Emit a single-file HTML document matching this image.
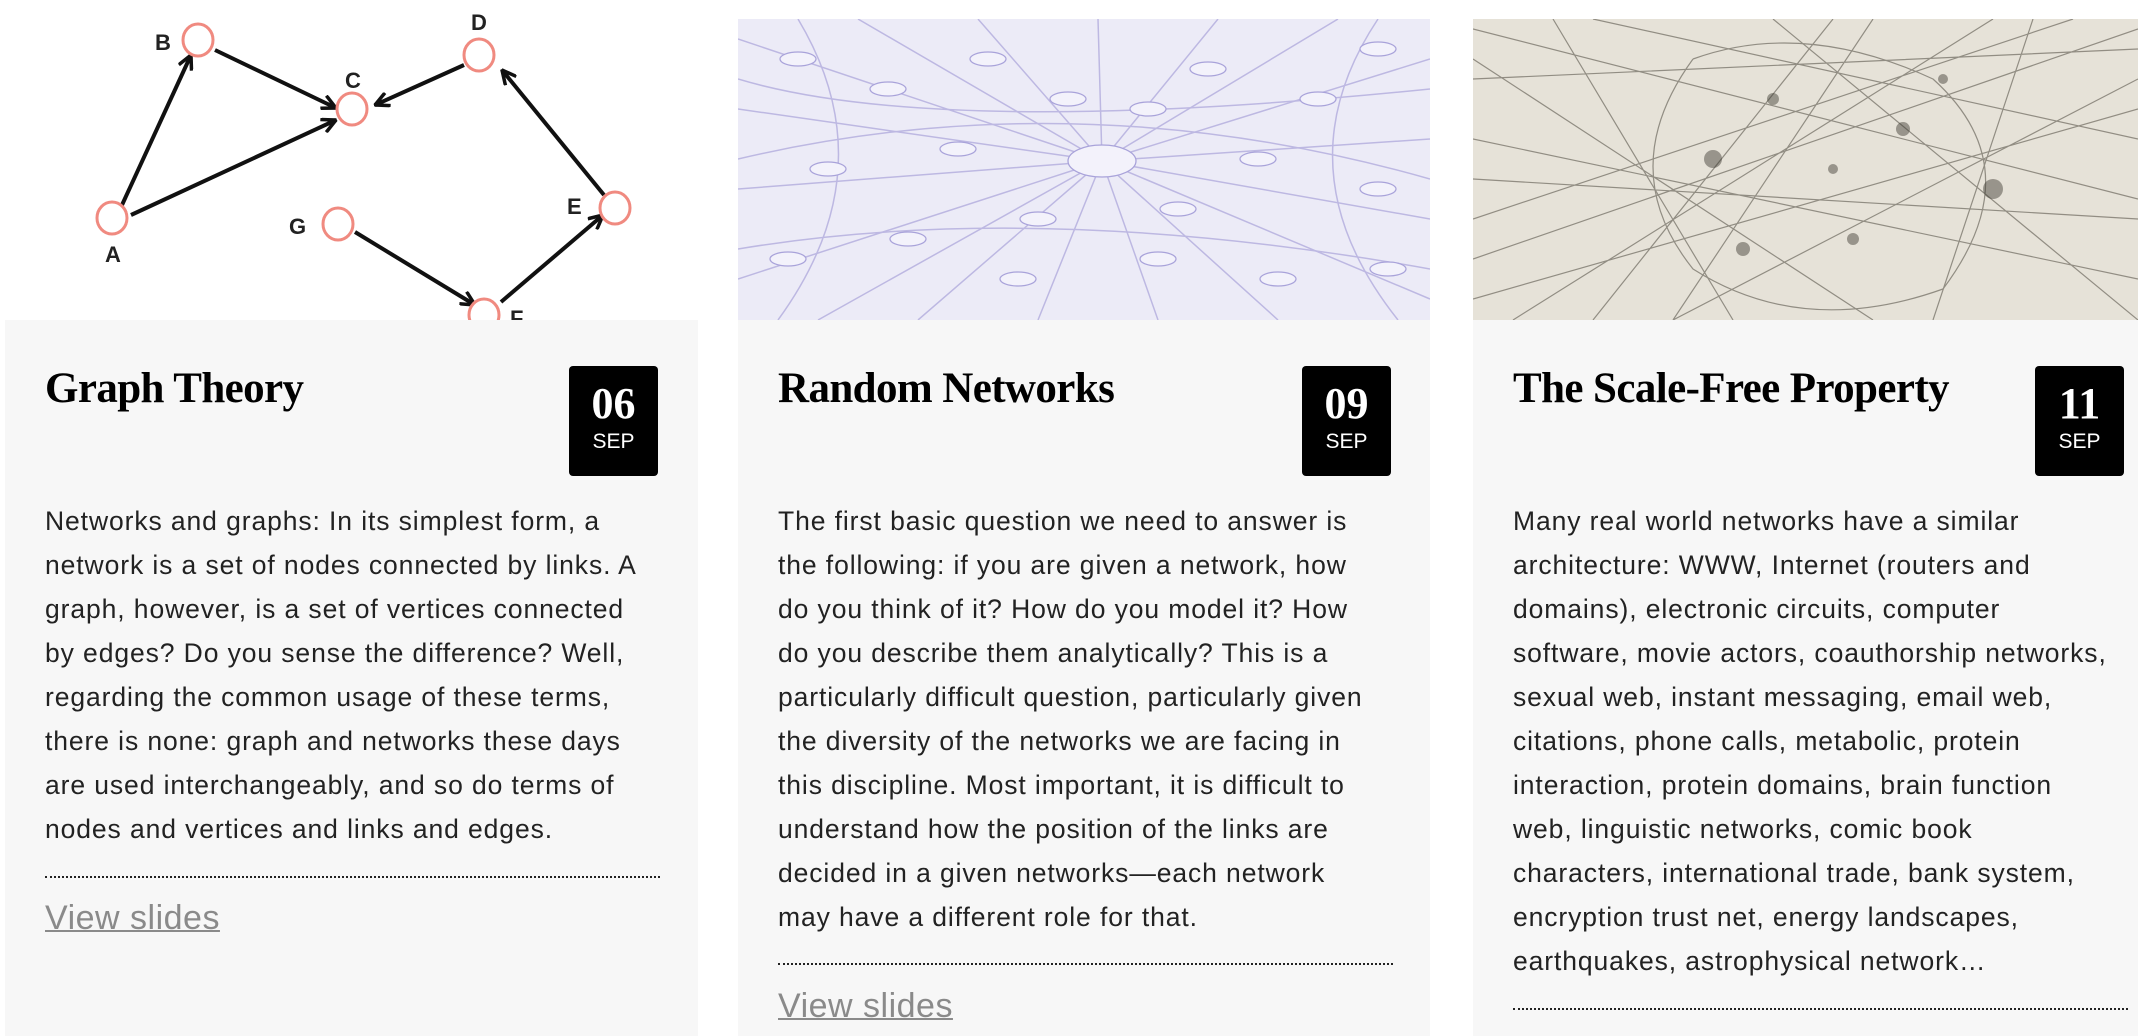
<!DOCTYPE html>
<html><head><meta charset="utf-8"><style>
*{margin:0;padding:0;box-sizing:border-box}
body{width:2138px;height:1036px;background:#fff;position:relative;overflow:hidden;font-family:"Liberation Sans",sans-serif;color:#1a1a1a}
.card{position:absolute;top:320px;height:716px;background:#f7f7f7}
.img{position:absolute;top:19px;height:301px;overflow:hidden}
h2{position:absolute;left:40px;top:44px;font-family:"Liberation Serif",serif;font-weight:bold;font-size:43px;letter-spacing:-0.6px;color:#000;white-space:nowrap}
.date{position:absolute;top:46px;width:89px;height:110px;background:#000;border-radius:4px;color:#fff;text-align:center}
.date b{display:block;font-family:"Liberation Serif",serif;font-size:44px;line-height:44px;margin-top:16px}
.date span{display:block;font-size:21px;line-height:24px;margin-top:4px}
p{position:absolute;left:40px;top:179px;font-size:26.5px;letter-spacing:0.9px;line-height:44px;white-space:nowrap;color:#222}
.dots{position:absolute;left:40px;width:615px;border-top:2px dotted #222}
.link{position:absolute;left:40px;font-size:34px;letter-spacing:0.5px;color:#8a8a8a;text-decoration:underline;text-decoration-thickness:2px}
</style></head><body>

<svg style="position:absolute;left:5px;top:0" width="693" height="320" viewBox="0 0 693 320">
<defs><marker id="ar" markerUnits="userSpaceOnUse" markerWidth="16" markerHeight="16" refX="15" refY="8" orient="auto"><path d="M1,1 L15,8 L1,15" fill="none" stroke="#111" stroke-width="3.5"/></marker></defs>
<g stroke="#111" stroke-width="4" fill="none" marker-end="url(#ar)">
<line x1="117" y1="205" x2="186" y2="55"/>
<line x1="126" y1="215" x2="331" y2="120"/>
<line x1="210" y1="50" x2="331" y2="108"/>
<line x1="459" y1="65" x2="370" y2="105"/>
<line x1="599" y1="195" x2="497" y2="70"/>
<line x1="350" y1="232" x2="470" y2="305"/>
<line x1="496" y1="302" x2="598" y2="215"/>
</g>
<g stroke="#f08a80" stroke-width="3" fill="#fff">
<ellipse cx="107" cy="218" rx="15" ry="16"/><ellipse cx="193" cy="40" rx="15" ry="16"/>
<ellipse cx="347" cy="109" rx="15" ry="16"/><ellipse cx="474" cy="55" rx="15" ry="16"/>
<ellipse cx="610" cy="208" rx="15" ry="16"/><ellipse cx="333" cy="224" rx="15" ry="16"/>
<ellipse cx="479" cy="315" rx="15" ry="16"/>
</g>
<g font-family="Liberation Sans" font-weight="bold" font-size="22" fill="#222">
<text x="150" y="50">B</text><text x="340" y="88">C</text><text x="466" y="30">D</text><text x="100" y="262">A</text><text x="284" y="234">G</text><text x="562" y="214">E</text><text x="505" y="326">F</text>
</g>
</svg>

<div class="img" style="left:738px;width:692px;background:#ecebf7">
<svg width="692" height="301">
<g stroke="#b8b3e0" stroke-width="1.5" fill="none" opacity=".9">
<path d="M364 142 L0 20 M364 142 L0 90 M364 142 L0 170 M364 142 L0 260 M364 142 L80 301 M364 142 L180 301 M364 142 L300 301 M364 142 L420 301 M364 142 L540 301 M364 142 L692 280 M364 142 L692 200 M364 142 L692 120 M364 142 L692 40 M364 142 L600 0 M364 142 L480 0 M364 142 L360 0 M364 142 L240 0 M364 142 L120 0"/>
<path d="M0 60 Q200 120 692 70 M0 230 Q300 180 692 250 M60 0 Q150 150 40 301 M640 0 Q540 150 660 301 M0 140 Q340 60 692 160"/>
</g>
<g stroke="#a9a3da" stroke-width="1.3" fill="#f3f2fb">
<ellipse cx="364" cy="142" rx="34" ry="16"/>
<ellipse cx="60" cy="40" rx="18" ry="7"/><ellipse cx="150" cy="70" rx="18" ry="7"/><ellipse cx="250" cy="40" rx="18" ry="7"/><ellipse cx="470" cy="50" rx="18" ry="7"/><ellipse cx="580" cy="80" rx="18" ry="7"/><ellipse cx="640" cy="30" rx="18" ry="7"/>
<ellipse cx="90" cy="150" rx="18" ry="7"/><ellipse cx="220" cy="130" rx="18" ry="7"/><ellipse cx="520" cy="140" rx="18" ry="7"/><ellipse cx="640" cy="170" rx="18" ry="7"/>
<ellipse cx="50" cy="240" rx="18" ry="7"/><ellipse cx="170" cy="220" rx="18" ry="7"/><ellipse cx="280" cy="260" rx="18" ry="7"/><ellipse cx="420" cy="240" rx="18" ry="7"/><ellipse cx="540" cy="260" rx="18" ry="7"/><ellipse cx="650" cy="250" rx="18" ry="7"/>
<ellipse cx="300" cy="200" rx="18" ry="7"/><ellipse cx="440" cy="190" rx="18" ry="7"/><ellipse cx="330" cy="80" rx="18" ry="7"/><ellipse cx="410" cy="90" rx="18" ry="7"/>
</g>
</svg></div>

<div class="img" style="left:1473px;width:665px;background:#e6e2d8">
<svg width="665" height="301">
<g stroke="#6e6a60" stroke-width="1.2" fill="none" opacity=".7">
<path d="M0 10 L665 180 M0 60 L665 30 M0 120 L665 260 M0 200 L600 0 M40 301 L520 0 M120 0 L665 120 M0 280 L665 90 M200 301 L400 0 M300 0 L665 301 M0 160 L665 200 M80 0 L260 301 M560 0 L460 301 M0 40 L400 301 M665 60 L200 301 M360 0 L120 301 M0 240 L665 10"/>
<path d="M220 40 Q330 0 460 60 Q560 150 470 270 Q330 320 220 250 Q140 150 220 40"/>
</g>
<g fill="#3a372f" opacity=".45">
<circle cx="240" cy="140" r="9"/><circle cx="300" cy="80" r="6"/><circle cx="430" cy="110" r="7"/><circle cx="520" cy="170" r="10"/><circle cx="380" cy="220" r="6"/><circle cx="270" cy="230" r="7"/><circle cx="470" cy="60" r="5"/><circle cx="360" cy="150" r="5"/>
</g>
</svg></div>

<div class="card" style="left:5px;width:693px">
<h2>Graph Theory</h2>
<div class="date" style="left:564px"><b>06</b><span>SEP</span></div>
<p>Networks and graphs: In its simplest form, a<br>network is a set of nodes connected by links. A<br>graph, however, is a set of vertices connected<br>by edges? Do you sense the difference? Well,<br>regarding the common usage of these terms,<br>there is none: graph and networks these days<br>are used interchangeably, and so do terms of<br>nodes and vertices and links and edges.</p>
<div class="dots" style="top:556px"></div>
<div class="link" style="top:579px">View slides</div>
</div>

<div class="card" style="left:738px;width:692px">
<h2>Random Networks</h2>
<div class="date" style="left:564px"><b>09</b><span>SEP</span></div>
<p>The first basic question we need to answer is<br>the following: if you are given a network, how<br>do you think of it? How do you model it? How<br>do you describe them analytically? This is a<br>particularly difficult question, particularly given<br>the diversity of the networks we are facing in<br>this discipline. Most important, it is difficult to<br>understand how the position of the links are<br>decided in a given networks—each network<br>may have a different role for that.</p>
<div class="dots" style="top:643px"></div>
<div class="link" style="top:667px">View slides</div>
</div>

<div class="card" style="left:1473px;width:665px">
<h2>The Scale-Free Property</h2>
<div class="date" style="left:562px"><b>11</b><span>SEP</span></div>
<p>Many real world networks have a similar<br>architecture: WWW, Internet (routers and<br>domains), electronic circuits, computer<br>software, movie actors, coauthorship networks,<br>sexual web, instant messaging, email web,<br>citations, phone calls, metabolic, protein<br>interaction, protein domains, brain function<br>web, linguistic networks, comic book<br>characters, international trade, bank system,<br>encryption trust net, energy landscapes,<br>earthquakes, astrophysical network…</p>
<div class="dots" style="top:688px;width:615px"></div>
</div>
</body></html>
